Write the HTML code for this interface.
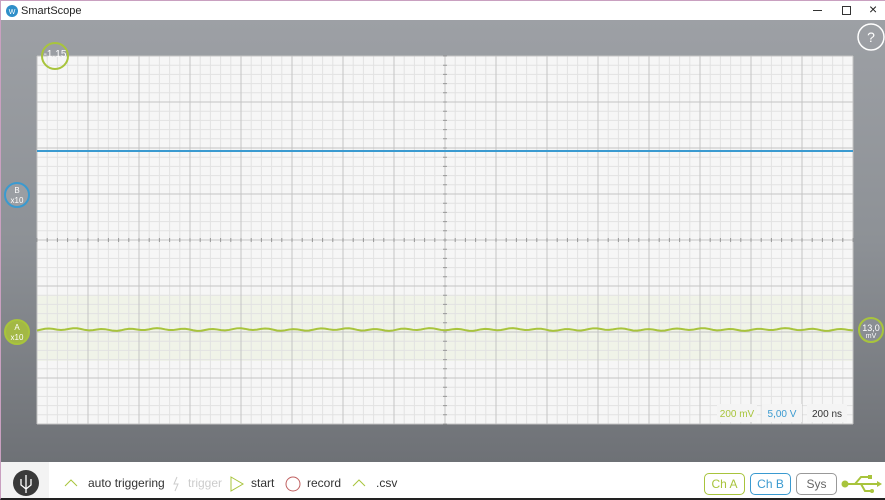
<!DOCTYPE html>
<html><head><meta charset="utf-8"><style>
*{margin:0;padding:0;box-sizing:border-box}
body{width:885px;height:500px;overflow:hidden;font-family:"Liberation Sans",sans-serif;position:relative;background:#fff}
.title{position:absolute;left:0;top:0;width:885px;height:20px;background:#fff;border-left:1px solid #c9a0c0;border-top:1px solid #c9a0c0;font-size:11px;color:#222}
.main{position:absolute;left:0;top:20px;width:885px;height:442px;background:linear-gradient(#9da0a5,#8d9196 50%,#6e7176);border-left:1px solid #c9a0c0}
.bottom{position:absolute;left:0;top:462px;width:885px;height:38px;background:#fff;border-left:1px solid #c9a0c0;border-bottom:2px solid #222}
.t{position:absolute;font-size:12px;color:#333;top:14px}
.btn{position:absolute;top:11px;height:22px;border:1px solid;border-radius:5px;font-size:12px;text-align:center;line-height:20px;width:41px}
</style></head><body>
<div class="title">
<svg style="position:absolute;left:5px;top:4px" width="12" height="12"><circle cx="6" cy="6" r="6" fill="#2f8fc9"/><text x="6" y="9" font-size="7" fill="#fff" text-anchor="middle">W</text></svg>
<span style="position:absolute;left:20px;top:4px">SmartScope</span>
<span style="position:absolute;left:812px;top:9px;width:9px;height:1px;background:#333"></span>
<span style="position:absolute;left:841px;top:5px;width:9px;height:9px;border:1px solid #333"></span>
<span style="position:absolute;left:868px;top:0px;font-size:14px">×</span>
</div>
<div class="main"></div>
<svg style="position:absolute;left:0;top:0" width="885" height="462">
<rect x="37" y="56" width="816" height="368" fill="#f6f6f6"/>
<rect x="37" y="295" width="816" height="66" fill="#f0f3e8"/>
<g stroke="#e2e2e2" stroke-width="1">
<path id="minor" d=""/>
</g>
<g id="g"></g>
<polyline points="" id="tr" fill="none" stroke="#a8c43c" stroke-width="2"/>
<line x1="37" y1="151" x2="853" y2="151" stroke="#3a9ad0" stroke-width="2"/>
<circle cx="55" cy="56" r="13" fill="none" stroke="#a8c43c" stroke-width="2"/>
<text x="55" y="57" font-size="10" fill="#fff" text-anchor="middle">-1.15</text>
<circle cx="17" cy="195" r="12" fill="#9a9ea3" stroke="#3a9ad0" stroke-width="2"/>
<text x="17" y="193" font-size="8" fill="#fff" text-anchor="middle">B</text><text x="17" y="203" font-size="8" fill="#fff" text-anchor="middle">x10</text>
<circle cx="17" cy="332" r="12" fill="#a3b845" stroke="#a8c43c" stroke-width="2"/>
<text x="17" y="330" font-size="8" fill="#fff" text-anchor="middle">A</text><text x="17" y="340" font-size="8" fill="#fff" text-anchor="middle">x10</text>
<circle cx="871" cy="330" r="12" fill="#8a8e93" stroke="#a8c43c" stroke-width="2"/>
<text x="871" y="331" font-size="9" fill="#fff" text-anchor="middle">13,0</text><text x="871" y="338" font-size="7" fill="#fff" text-anchor="middle">mV</text>
<circle cx="871" cy="37" r="13" fill="none" stroke="#fff" stroke-width="1.5"/>
<text x="871" y="42" font-size="14" fill="#fff" text-anchor="middle">?</text>
<g font-size="10" text-anchor="middle">
<rect x="717" y="404" width="40" height="18" fill="#f4f4f4"/><text x="737" y="417" fill="#a8c43c">200 mV</text>
<rect x="762" y="404" width="40" height="18" fill="#f4f4f4"/><text x="782" y="417" fill="#3a9ad0">5,00 V</text>
<rect x="807" y="404" width="40" height="18" fill="#f4f4f4"/><text x="827" y="417" fill="#333">200 ns</text>
</g>
</svg>
<script>
var d="";
for(var i=0;i<=80;i++){var x=37+i*10.2;d+="M"+x+" 56V424";}
for(var j=0;j<=40;j++){var y=56+j*9.2;d+="M37 "+y+"H853";}
document.getElementById("minor").setAttribute("d",d);
var g="";
for(var i=0;i<=16;i++){var x=37+i*51;g+="M"+x+" 56V424";}
for(var j=0;j<=8;j++){var y=56+j*46;g+="M37 "+y+"H853";}
var ns="http://www.w3.org/2000/svg";
var p=document.createElementNS(ns,"path");p.setAttribute("d",g);p.setAttribute("stroke","#c4c4c4");p.setAttribute("fill","none");
document.getElementById("g").appendChild(p);
var t="";
for(var i=0;i<=80;i++){var x=37+i*10.2;t+="M"+x+" 238V242";}
for(var j=0;j<=40;j++){var y=56+j*9.2;t+="M443 "+y+"H447";}
var p2=document.createElementNS(ns,"path");p2.setAttribute("d",t);p2.setAttribute("stroke","#999");
document.getElementById("g").appendChild(p2);
var pts="";
for(var x=37;x<=853;x+=4){pts+=x+","+(329.5+0.9*Math.sin(x*0.23)+0.5*Math.sin(x*0.07))+" ";}
document.getElementById("tr").setAttribute("points",pts);
</script>
<div class="bottom">
<div style="position:absolute;left:0;top:0;width:48px;height:36px;background:#f3f3f3"></div>
<svg style="position:absolute;left:11px;top:7px" width="28" height="28"><circle cx="14" cy="14" r="13" fill="#3a3a3a"/><path d="M14 6V24M9 10V16L14 20M19 10V16L14 20" stroke="#fff" stroke-width="1.3" fill="none"/></svg>
<svg style="position:absolute;left:63px;top:17px" width="14" height="8"><path d="M1 7L7 1L13 7" stroke="#a8c43c" fill="none"/></svg>
<span class="t" style="left:87px">auto triggering</span>
<svg style="position:absolute;left:171px;top:14px" width="8" height="16"><path d="M5 1L2 8H6L3 15" stroke="#ccc" fill="none"/></svg>
<span class="t" style="left:187px;color:#ccc">trigger</span>
<svg style="position:absolute;left:229px;top:14px" width="14" height="16"><path d="M1 1L13 8L1 15Z" stroke="#a8c43c" fill="none"/></svg>
<span class="t" style="left:250px">start</span>
<svg style="position:absolute;left:284px;top:14px" width="16" height="16"><circle cx="8" cy="8" r="7" stroke="#c06060" fill="none"/></svg>
<span class="t" style="left:306px">record</span>
<svg style="position:absolute;left:351px;top:17px" width="14" height="8"><path d="M1 7L7 1L13 7" stroke="#a8c43c" fill="none"/></svg>
<span class="t" style="left:375px">.csv</span>
<div class="btn" style="left:703px;border-color:#a8c43c;color:#a8c43c">Ch A</div>
<div class="btn" style="left:749px;border-color:#3a9ad0;color:#3a9ad0">Ch B</div>
<div class="btn" style="left:795px;border-color:#999;color:#666">Sys</div>
<svg style="position:absolute;left:840px;top:12px" width="42" height="20"><circle cx="4" cy="10" r="3.5" fill="#a8c43c"/><path d="M4 10H38M14 10L20 3H28M20 10L24 17H30" stroke="#a8c43c" stroke-width="2" fill="none"/><path d="M36 7L41 10L36 13Z" fill="#a8c43c"/><rect x="27" y="1" width="4" height="4" fill="#a8c43c"/><circle cx="31" cy="17" r="2" fill="#a8c43c"/></svg>
</div>
</body></html>
